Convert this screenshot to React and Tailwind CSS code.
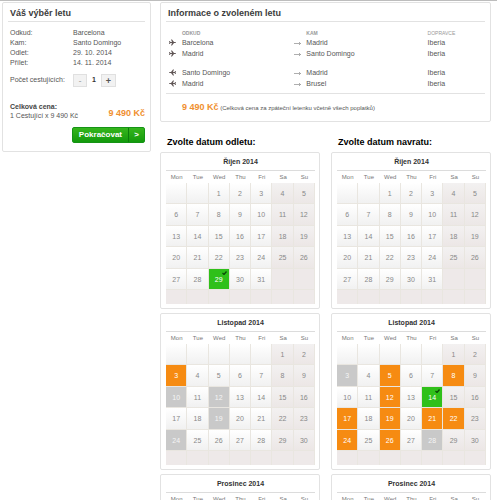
import { useState } from 'react';

const WEEKDAYS = ['Mon', 'Tue', 'Wed', 'Thu', 'Fri', 'Sa', 'Su'];

const MONTHS = [
  { name: 'Říjen 2014', offset: 2, days: 31 },
  { name: 'Listopad 2014', offset: 5, days: 30 },
  { name: 'Prosinec 2014', offset: 0, days: 31 },
];

const DEPARTURES = [
  { selected: 29, available: [], soldOut: [] },
  { selected: null, available: [3], soldOut: [10, 12, 19, 24] },
  { selected: null, available: [], soldOut: [] },
];

const RETURNS = [
  { selected: null, available: [], soldOut: [] },
  { selected: 14, available: [5, 8, 12, 17, 19, 21, 22, 24, 26], soldOut: [3, 28] },
  { selected: null, available: [], soldOut: [] },
];

const FLIGHTS = [
  { from: 'Barcelona', to: 'Madrid', carrier: 'Iberia' },
  { from: 'Madrid', to: 'Santo Domingo', carrier: 'Iberia' },
  { from: 'Santo Domingo', to: 'Madrid', carrier: 'Iberia', back: true, first: true },
  { from: 'Madrid', to: 'Brusel', carrier: 'Iberia', back: true },
];

function Plane({ back }) {
  return (
    <svg viewBox="0 0 14 14" className={back ? 'block size-[7px] -scale-x-100' : 'block size-[7px]'} aria-hidden="true">
      <path d="M0 4h1.500l1.500 2h3L4 1h2l4 5h2Q14 6 14 7t-2 1h-2l-4 5H4l2-5H3l-1.500 2H0l1-3z" fill="#5f5555" />
    </svg>
  );
}

function Arrow() {
  return (
    <svg viewBox="0 0 14 8" className="block h-1 w-[7px]" fill="none" stroke="#777" strokeWidth="1.2" aria-hidden="true">
      <path d="M0 5h13M10 2l3 3-3 3" />
    </svg>
  );
}

function Panel({ title, children }) {
  return (
    <section className="rounded-[2px] border border-[#e2e2e2] bg-white px-[5px]">
      <h2 className="h-[19px] border-b border-[#e2e2e2] pl-[2px] text-[9px] leading-[20px] font-bold text-[#3c3c3c]">{title}</h2>
      {children}
    </section>
  );
}

function Summary() {
  const [count, setCount] = useState(1);
  const rows = [
    ['Odkud:', 'Barcelona'],
    ['Kam:', 'Santo Domingo'],
    ['Odlet:', '29. 10. 2014'],
    ['Přílet:', '14. 11. 2014'],
  ];

  return (
    <Panel title="Váš výběr letu">
      <div className="pt-[6px] pb-2 pl-[2px]">
        <dl className="grid grid-cols-[63px_1fr] text-[7px] leading-[10px]">
          {rows.map(([label, value]) => (
            <div key={label} className="contents">
              <dt>{label}</dt>
              <dd>{value}</dd>
            </div>
          ))}
        </dl>
        <div className="mt-[6px] grid grid-cols-[63px_1fr] items-center text-[7px]">
          <span id="count-label">Počet cestujících:</span>
          <div role="group" aria-labelledby="count-label" className="flex items-center font-bold">
            <button type="button" aria-label="Ubrat" onClick={() => setCount(Math.max(1, count - 1))} className="h-[13px] w-[14px] border border-[#e0e0e0] bg-[#f2f2f2] text-[8px] leading-[10px] text-[#aaa]">-</button>
            <output className="w-[14px] text-center text-[#333]">{count}</output>
            <button type="button" aria-label="Přidat" onClick={() => setCount(count + 1)} className="h-[13px] w-[15px] border border-[#e0e0e0] bg-[#f2f2f2] text-[9px] leading-[10px] text-[#555]">+</button>
          </div>
        </div>
        <div className="mt-[15px] flex items-center justify-between text-[7px] leading-[9px]">
          <div className="whitespace-nowrap">
            <p className="font-bold text-[#444]">Celková cena:</p>
            <p>{count} Cestující x 9 490 Kč</p>
          </div>
          <strong className="pt-1 text-[9px] whitespace-nowrap text-[#f0902f]">{(count * 9490).toLocaleString('en').replace(',', ' ')} Kč</strong>
        </div>
        <button type="button" className="mt-[7px] ml-auto flex h-4 items-center rounded-[2px] border border-[#159415] bg-linear-to-b from-[#35b51c] to-[#119a0c] text-[8px] font-bold text-white">
          <span className="border-r border-[#0c7c0c] px-[6px] leading-[14px]">Pokračovat</span>
          <span className="w-[15px] text-center">&gt;</span>
        </button>
      </div>
    </Panel>
  );
}

function FlightInfo() {
  return (
    <Panel title="Informace o zvoleném letu">
      <table className="mt-[7px] mb-1 w-full table-fixed border-collapse text-left text-[7px] leading-[11px]">
        <thead>
          <tr className="h-2 text-[5px] leading-[8px] text-[#999]">
            <td className="w-[5%]" />
            <th className="w-[35%] p-0">ODKUD</th>
            <td className="w-[4%]" />
            <th className="w-[38%] p-0">KAM</th>
            <th className="w-[18%] p-0 font-normal">DOPRAVCE</th>
          </tr>
        </thead>
        <tbody>
          {FLIGHTS.map((f, i) => (
            <tr key={i} className={f.first ? 'h-[19px] align-bottom' : 'h-[11px] align-bottom'}>
              <td className="p-0 pb-[2px] pl-[3px]"><Plane back={f.back} /></td>
              <td className="p-0">{f.from}</td>
              <td className="p-0 pb-[3px]"><Arrow /></td>
              <td className="p-0">{f.to}</td>
              <td className="p-0">{f.carrier}</td>
            </tr>
          ))}
        </tbody>
      </table>
      <p className="h-7 border-t border-[#e2e2e2] pl-[5%] text-[6px] leading-[27px]">
        <strong className="text-[9px] text-[#f0902f]">9 490 Kč</strong> (Celková cena za zpáteční letenku včetně všech poplatků)
      </p>
    </Panel>
  );
}

function cellStyle(day, column, trailing, state) {
  if (day && day === state.selected) return 'bg-[#2fc01a] text-white';
  if (state.available.includes(day)) return 'bg-[#f68b12] text-white';
  if (state.soldOut.includes(day)) return 'bg-[#c9c9c9] text-[#f5f5f5]';
  if (trailing) return 'bg-[#eee9e9]';
  if (column > 4) return 'bg-linear-to-b from-[#f3f1f1] to-[#ece7e6] text-[#888]';
  return 'bg-linear-to-b from-white to-[#f1f1f1] text-[#888]';
}

function Calendar({ month, initial }) {
  const [selected, setSelected] = useState(initial.selected);
  const state = { ...initial, selected };

  return (
    <section className="rounded-[2px] border border-[#e2e2e2] bg-white pr-1 pb-1 pl-[5px]">
      <h3 className="h-[18px] border-b border-[#dcdcdc] text-center text-[7px] leading-[18px] font-bold text-[#333]">{month.name}</h3>
      <table className="w-full table-fixed border-separate border-spacing-0 text-center text-[7px]" aria-label={month.name}>
        <thead>
          <tr className="h-3 text-[6px] leading-[12px] text-[#777]">
            {WEEKDAYS.map((d) => <th key={d} className="p-0 font-normal">{d}</th>)}
          </tr>
        </thead>
        <tbody>
          {[0, 1, 2, 3, 4].map((row) => (
            <tr key={row} className="h-[21px] even:h-[22px]">
              {WEEKDAYS.map((d, column) => {
                const n = row * 7 + column - month.offset + 1;
                const day = n > 0 && n <= month.days ? n : null;
                return (
                  <td key={d} className={`relative border-r border-b border-[#e9e6e0] p-0 ${cellStyle(day, column, n > month.days, state)}`}>
                    {day && (
                      <button
                        type="button"
                        disabled={state.soldOut.includes(day)}
                        onClick={() => setSelected(day)}
                        className="block h-5 w-full pt-[2px]"
                      >
                        {day}
                      </button>
                    )}
                    {day && day === selected && (
                      <svg viewBox="0 0 10 8" className="absolute top-[2px] right-[2px] h-1 w-[5px]" fill="none" stroke="#0c4a08" strokeWidth="2.6" aria-hidden="true">
                        <path d="M1 4l3 3 5-6" />
                      </svg>
                    )}
                  </td>
                );
              })}
            </tr>
          ))}
          <tr className="h-[14px]">
            {WEEKDAYS.map((d) => <td key={d} className="border-r border-[#e9e6e0] bg-[#eee9e9] p-0" />)}
          </tr>
        </tbody>
      </table>
    </section>
  );
}

function CalendarColumn({ title, states }) {
  return (
    <div className="flex min-w-0 flex-1 flex-col gap-1">
      <h2 className="pl-[7px] text-[9px] leading-[12px] font-bold text-black">{title}</h2>
      {MONTHS.map((month, i) => <Calendar key={month.name} month={month} initial={states[i]} />)}
    </div>
  );
}

export default function App() {
  return (
    <div className="min-h-screen border-t border-[#bdbdbd] bg-white pt-px pr-[6px] pl-[2px] font-['Liberation_Sans',Arial,sans-serif] text-[#555]">
      <div className="flex items-start gap-[9px]">
        <aside className="w-[149px] shrink-0">
          <Summary />
        </aside>
        <main className="min-w-0 flex-1">
          <FlightInfo />
          <div className="mt-[14px] flex gap-[11px]">
            <CalendarColumn title="Zvolte datum odletu:" states={DEPARTURES} />
            <CalendarColumn title="Zvolte datum navratu:" states={RETURNS} />
          </div>
        </main>
      </div>
    </div>
  );
}
